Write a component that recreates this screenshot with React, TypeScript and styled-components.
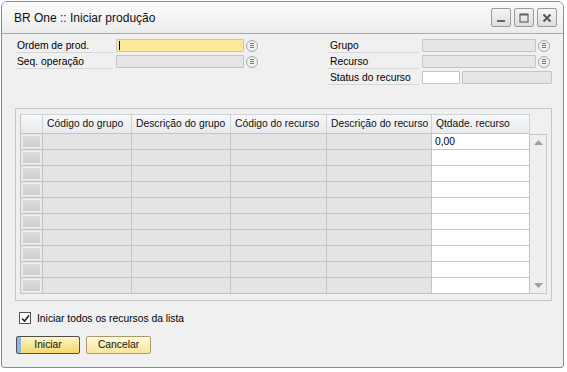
import React from "react";
import styled, { createGlobalStyle } from "styled-components";

const GlobalStyle = createGlobalStyle`
  html, body {
    margin: 0;
    padding: 0;
    background: #ffffff;
  }
  body {
    font-family: "Liberation Sans", Arial, sans-serif;
    font-size: 10.3px;
    color: #000;
  }
`;

const Window = styled.div`
  width: 563px;
  height: 367px;
  margin: 1px 0 0 1px;
  border: 1px solid #5a96e2;
  border-radius: 6px 6px 3px 3px;
  background: #f0f0f0;
  display: flex;
  flex-direction: column;
  overflow: hidden;
  box-sizing: border-box;
`;

const TitleBar = styled.div`
  height: 31px;
  flex: none;
  display: flex;
  align-items: center;
  justify-content: space-between;
  padding: 0 6px 0 12px;
  background: linear-gradient(#fbfbfb, #ececec);
  border-bottom: 1px solid #a9a9a9;
`;

const Title = styled.div`
  font-size: 12px;
  color: #111;
  padding-top: 1px;
`;

const WinButtons = styled.div`
  display: flex;
  gap: 3px;
`;

const WinButton = styled.div`
  width: 18px;
  height: 17px;
  border: 1px solid #9a9a9a;
  border-radius: 2px;
  background: linear-gradient(#f6f6f6, #dcdcdc);
  display: flex;
  align-items: center;
  justify-content: center;
`;

const Content = styled.div`
  flex: 1;
  padding: 4px 11px 0 13px;
  display: flex;
  flex-direction: column;
`;

const FormArea = styled.div`
  display: flex;
  justify-content: space-between;
  height: 67px;
`;

const FormColumn = styled.div`
  display: flex;
  flex-direction: column;
  gap: 1px;
`;

const Row = styled.div`
  display: flex;
  align-items: center;
  height: 15px;
`;

const Label = styled.div<{ $w: number }>`
  width: ${(p) => p.$w}px;
  height: 14px;
  line-height: 14px;
  padding-left: 2px;
  box-sizing: border-box;
  border-bottom: 1px solid #d6d6d6;
  margin-right: 3px;
  white-space: nowrap;
`;

const Input = styled.div<{ $w: number; $bg: string; $gap?: number }>`
  width: ${(p) => p.$w}px;
  height: 13px;
  margin-left: ${(p) => p.$gap ?? 0}px;
  box-sizing: border-box;
  border: 1px solid #c4c4c4;
  border-radius: 1px;
  background: ${(p) => p.$bg};
  position: relative;
`;

const Caret = styled.div`
  position: absolute;
  left: 2px;
  top: 1px;
  width: 1px;
  height: 9px;
  background: #000;
`;

const PickIcon = styled.svg`
  margin-left: 2px;
  flex: none;
`;

const GridFrame = styled.div`
  margin-top: 3px;
  width: 537px;
  height: 193px;
  box-sizing: border-box;
  border: 1px solid #c6c6c6;
  padding: 5px 0 0 4px;
  display: flex;
`;

const Table = styled.div`
  display: grid;
  grid-template-columns: 22px 89px 99px 96px 105px 98px;
  grid-auto-rows: 16px;
  grid-template-rows: 20px;
  border-left: 1px solid #c4c4c4;
  align-self: flex-start;
`;

const HeadCell = styled.div`
  background: linear-gradient(#f7f8fa, #e7eaee);
  border-right: 1px solid #cfd2d6;
  border-top: 1px solid #cfd2d6;
  border-bottom: 1px solid #c4c4c4;
  padding-left: 4px;
  line-height: 18px;
  white-space: nowrap;
  overflow: hidden;
  color: #111;
`;

const RowHead = styled.div`
  background: #e4e4e4;
  border-right: 1px solid #c4c4c4;
  border-bottom: 1px solid #c4c4c4;
  padding: 1px;
  box-sizing: border-box;
  & > div {
    height: 100%;
    background: linear-gradient(#dedede, #cdcdcd);
    border: 1px solid #f0f0f0;
    box-sizing: border-box;
  }
`;

const Cell = styled.div<{ $white?: boolean }>`
  background: ${(p) => (p.$white ? "#ffffff" : "#e4e4e4")};
  border-right: 1px solid #c4c4c4;
  border-bottom: 1px solid #c4c4c4;
  padding-left: 3px;
  line-height: 15px;
`;

const ScrollBar = styled.div`
  margin-top: 20px;
  width: 17px;
  height: 160px;
  box-sizing: border-box;
  border: 1px solid #c8c8c8;
  border-left: none;
  background: #efefef;
  display: flex;
  flex-direction: column;
  justify-content: space-between;
  align-items: center;
  padding: 5px 0;
`;

const CheckRow = styled.label`
  display: flex;
  align-items: center;
  gap: 6px;
  margin-top: 11px;
  padding-left: 4px;
`;

const CheckBox = styled.div`
  width: 10px;
  height: 10px;
  border: 1px solid #555;
  background: #fff;
  display: flex;
  align-items: center;
  justify-content: center;
`;

const ButtonRow = styled.div`
  display: flex;
  gap: 6px;
  margin-top: 12px;
  padding-left: 1px;
`;

const Button = styled.div<{ $primary?: boolean; $w: number }>`
  width: ${(p) => p.$w}px;
  height: 18px;
  box-sizing: border-box;
  border: 1px solid ${(p) => (p.$primary ? "#505050" : "#a89a6a")};
  border-radius: 2px;
  background: ${(p) =>
    p.$primary
      ? "linear-gradient(90deg, #8fb4e8 0 4px, transparent 4px), linear-gradient(#fff6c4, #f3d66e)"
      : "linear-gradient(#fffbe0, #f8e596)"};
  text-align: center;
  line-height: 16px;
  color: #111;
`;

const columns = [
  "Código do grupo",
  "Descrição do grupo",
  "Código do recurso",
  "Descrição do recurso",
  "Qtdade. recurso",
];

function Pick() {
  return (
    <PickIcon width="12" height="12" viewBox="0 0 12 12">
      <circle cx="6" cy="6" r="5.5" fill="#f0f0f0" stroke="#a8a8a8" />
      <line x1="4" y1="3.5" x2="8" y2="3.5" stroke="#7a7a7a" />
      <line x1="4" y1="5.5" x2="8" y2="5.5" stroke="#7a7a7a" />
      <line x1="4" y1="7.5" x2="8" y2="7.5" stroke="#7a7a7a" />
    </PickIcon>
  );
}

function App() {
  const rows = Array.from({ length: 10 }, (_, i) => i);
  return (
    <>
      <GlobalStyle />
      <Window>
        <TitleBar>
          <Title>BR One :: Iniciar produção</Title>
          <WinButtons>
            <WinButton>
              <svg width="10" height="10" viewBox="0 0 10 10">
                <rect x="1" y="7" width="8" height="2" fill="#666" />
              </svg>
            </WinButton>
            <WinButton>
              <svg width="10" height="10" viewBox="0 0 10 10">
                <rect x="1" y="1" width="8" height="8" fill="none" stroke="#666" strokeWidth="1.2" />
                <rect x="1" y="1" width="8" height="1.5" fill="#666" />
              </svg>
            </WinButton>
            <WinButton>
              <svg width="10" height="10" viewBox="0 0 10 10">
                <path d="M1.5 1.5 L8.5 8.5 M8.5 1.5 L1.5 8.5" stroke="#555" strokeWidth="2" />
              </svg>
            </WinButton>
          </WinButtons>
        </TitleBar>
        <Content>
          <FormArea>
            <FormColumn>
              <Row>
                <Label $w={98}>Ordem de prod.</Label>
                <Input $w={128} $bg="#fde99a">
                  <Caret />
                </Input>
                <Pick />
              </Row>
              <Row>
                <Label $w={98}>Seq. operação</Label>
                <Input $w={128} $bg="#e6e6e6" />
                <Pick />
              </Row>
            </FormColumn>
            <FormColumn>
              <Row>
                <Label $w={91}>Grupo</Label>
                <Input $w={114} $bg="#e6e6e6" />
                <Pick />
              </Row>
              <Row>
                <Label $w={91}>Recurso</Label>
                <Input $w={114} $bg="#e6e6e6" />
                <Pick />
              </Row>
              <Row>
                <Label $w={91}>Status do recurso</Label>
                <Input $w={38} $bg="#ffffff" />
                <Input $w={90} $bg="#e6e6e6" $gap={2} />
              </Row>
            </FormColumn>
          </FormArea>
          <GridFrame>
            <Table>
              <HeadCell />
              {columns.map((c) => (
                <HeadCell key={c}>{c}</HeadCell>
              ))}
              {rows.map((r) => (
                <React.Fragment key={r}>
                  <RowHead>
                    <div />
                  </RowHead>
                  <Cell />
                  <Cell />
                  <Cell />
                  <Cell />
                  <Cell $white>{r === 0 ? "0,00" : ""}</Cell>
                </React.Fragment>
              ))}
            </Table>
            <ScrollBar>
              <svg width="9" height="5" viewBox="0 0 9 5">
                <path d="M0 5 L4.5 0 L9 5 Z" fill="#a0a0a0" />
              </svg>
              <svg width="9" height="5" viewBox="0 0 9 5">
                <path d="M0 0 L9 0 L4.5 5 Z" fill="#a0a0a0" />
              </svg>
            </ScrollBar>
          </GridFrame>
          <CheckRow>
            <CheckBox>
              <svg width="9" height="9" viewBox="0 0 9 9">
                <path d="M1 4.5 L3.5 7 L8 1.5" fill="none" stroke="#222" strokeWidth="1.6" />
              </svg>
            </CheckBox>
            Iniciar todos os recursos da lista
          </CheckRow>
          <ButtonRow>
            <Button $primary $w={64}>Iniciar</Button>
            <Button $w={65}>Cancelar</Button>
          </ButtonRow>
        </Content>
      </Window>
    </>
  );
}

export default App;
